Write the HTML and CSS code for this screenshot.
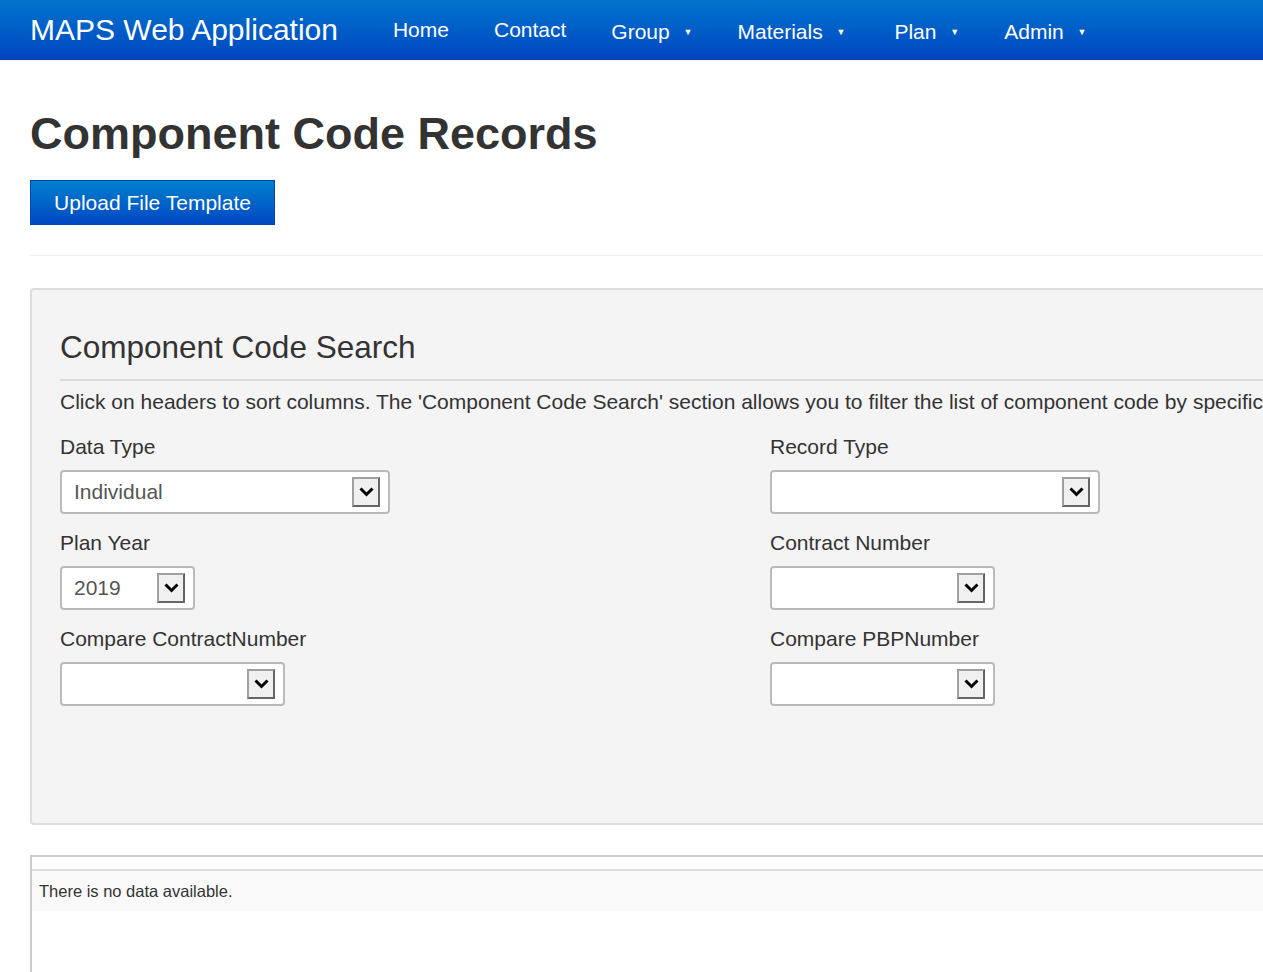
FILE: index.html
```html
<!DOCTYPE html>
<html>
<head>
<meta charset="utf-8">
<title>Component Code Records</title>
<link rel="stylesheet" href="styles.css">
</head>
<body>
<header class="navbar">
  <div class="brand">MAPS Web Application</div>
  <nav class="nav">
    <a class="nav-item plain">Home</a>
    <a class="nav-item plain">Contact</a>
    <a class="nav-item drop">Group <span class="caret">&#9660;</span></a>
    <a class="nav-item drop">Materials <span class="caret">&#9660;</span></a>
    <a class="nav-item drop">Plan <span class="caret">&#9660;</span></a>
    <a class="nav-item drop">Admin <span class="caret">&#9660;</span></a>
  </nav>
</header>
<main class="page">
  <h1 class="title">Component Code Records</h1>
  <button class="btn">Upload File Template</button>
  <hr class="rule">
  <section class="panel">
    <h2 class="panel-title">Component Code Search</h2>
    <p class="help">Click on headers to sort columns. The 'Component Code Search' section allows you to filter the list of component code by specific criteria.</p>
    <div class="grid">
      <div class="field">
        <label class="label">Data Type</label>
        <div class="select w-lg"><span class="value">Individual</span><span class="arrow"><svg width="15" height="10" viewBox="0 0 15 10"><path d="M1.5 1.5 L7.5 7.5 L13.5 1.5" fill="none" stroke="#000" stroke-width="3"/></svg></span></div>
      </div>
      <div class="field">
        <label class="label">Record Type</label>
        <div class="select w-lg"><span class="value"></span><span class="arrow"><svg width="15" height="10" viewBox="0 0 15 10"><path d="M1.5 1.5 L7.5 7.5 L13.5 1.5" fill="none" stroke="#000" stroke-width="3"/></svg></span></div>
      </div>
      <div class="field">
        <label class="label">Plan Year</label>
        <div class="select w-sm"><span class="value">2019</span><span class="arrow"><svg width="15" height="10" viewBox="0 0 15 10"><path d="M1.5 1.5 L7.5 7.5 L13.5 1.5" fill="none" stroke="#000" stroke-width="3"/></svg></span></div>
      </div>
      <div class="field">
        <label class="label">Contract Number</label>
        <div class="select w-md"><span class="value"></span><span class="arrow"><svg width="15" height="10" viewBox="0 0 15 10"><path d="M1.5 1.5 L7.5 7.5 L13.5 1.5" fill="none" stroke="#000" stroke-width="3"/></svg></span></div>
      </div>
      <div class="field">
        <label class="label">Compare ContractNumber</label>
        <div class="select w-md"><span class="value"></span><span class="arrow"><svg width="15" height="10" viewBox="0 0 15 10"><path d="M1.5 1.5 L7.5 7.5 L13.5 1.5" fill="none" stroke="#000" stroke-width="3"/></svg></span></div>
      </div>
      <div class="field">
        <label class="label">Compare PBPNumber</label>
        <div class="select w-md"><span class="value"></span><span class="arrow"><svg width="15" height="10" viewBox="0 0 15 10"><path d="M1.5 1.5 L7.5 7.5 L13.5 1.5" fill="none" stroke="#000" stroke-width="3"/></svg></span></div>
      </div>
    </div>
  </section>
  <section class="table">
    <div class="table-head"></div>
    <div class="table-row">There is no data available.</div>
  </section>
</main>
</body>
</html>
```
FILE: styles.css
```css
html, body {
  margin: 0;
  padding: 0;
  overflow: hidden;
  background: #fff;
}
body {
  font-family: "Liberation Sans", Arial, sans-serif;
  color: #333;
  width: 1263px;
  height: 972px;
}
.navbar {
  height: 60px;
  box-sizing: border-box;
  background: linear-gradient(to bottom, #0074cc 0%, #0046c2 100%);
  border-bottom: 1px solid #003aa8;
  display: flex;
  align-items: center;
  padding-left: 30px;
}
.brand {
  color: #fff;
  font-size: 30px;
  line-height: 30px;
  white-space: nowrap;
}
.nav {
  display: flex;
  align-items: center;
  margin-left: 55px;
}
.nav-item {
  color: #fff;
  font-size: 21px;
  white-space: nowrap;
  margin-right: 45px;
}
.nav-item.drop {
  margin-top: 4px;
}
.nav-item:nth-child(4) {
  margin-right: 49px;
}
.caret {
  font-size: 9px;
  vertical-align: 4px;
  margin-left: 8px;
}
.page {
  width: 1400px;
  padding-left: 30px;
}
.title {
  font-size: 45px;
  line-height: 48px;
  font-weight: bold;
  margin: 50px 0 22px 0;
  white-space: nowrap;
}
.btn {
  display: block;
  height: 45px;
  width: 245px;
  border: 1px solid #0046b8;
  background: linear-gradient(to bottom, #0080cc 0%, #0048c4 100%);
  color: #fff;
  font-family: "Liberation Sans", Arial, sans-serif;
  font-size: 21px;
  padding: 0;
  border-radius: 0;
}
.rule {
  border: 0;
  border-top: 1px solid #eee;
  margin: 30px 0 32px 0;
}
.panel {
  background: #f4f4f4;
  border: 2px solid #ddd;
  border-radius: 4px;
  padding: 37px 28px 0 28px;
  height: 537px;
  box-sizing: border-box;
}
.panel-title {
  font-size: 31.5px;
  font-weight: normal;
  line-height: 40px;
  margin: 0;
  padding-bottom: 12px;
  border-bottom: 2px solid #ddd;
  white-space: nowrap;
}
.help {
  font-size: 21px;
  line-height: 24px;
  margin: 9px 0 21px 0;
  white-space: nowrap;
}
.grid {
  display: grid;
  grid-template-columns: 710px 1fr;
  row-gap: 17px;
}
.field {
  display: flex;
  flex-direction: column;
  align-items: flex-start;
}
.label {
  font-size: 21px;
  line-height: 24px;
  margin-bottom: 11px;
}
.select {
  height: 44px;
  box-sizing: border-box;
  background: #fff;
  border: 2px solid #bbb;
  border-radius: 4px;
  display: flex;
  align-items: center;
  justify-content: space-between;
  padding: 0 8px 0 12px;
}
.w-lg { width: 330px; }
.w-md { width: 225px; }
.w-sm { width: 135px; }
.value {
  font-size: 21px;
  color: #555;
}
.arrow {
  width: 28px;
  height: 30px;
  box-sizing: border-box;
  background: #f0f0f0;
  border: 2px solid #a0a0a0;
  border-right-color: #666;
  border-bottom-color: #666;
  display: flex;
  align-items: center;
  justify-content: center;
}
.table {
  margin-top: 30px;
  border-top: 2px solid #ccc;
  border-left: 2px solid #ccc;
  height: 200px;
}
.table-head {
  height: 12px;
  border-bottom: 2px solid #ddd;
}
.table-row {
  background: #f9f9f9;
  height: 40px;
  line-height: 40px;
  padding-left: 7px;
  font-size: 16.5px;
  white-space: nowrap;
}
```
